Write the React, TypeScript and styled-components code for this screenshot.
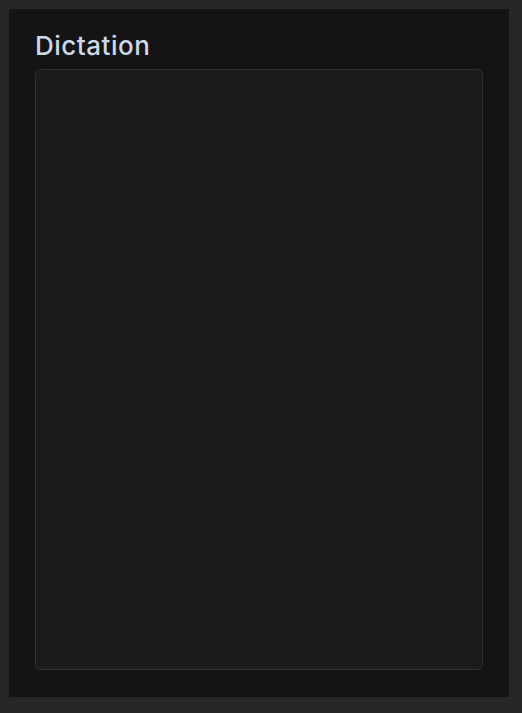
import styled, { createGlobalStyle } from "styled-components";

const GlobalStyle = createGlobalStyle`
  html, body {
    margin: 0;
    padding: 0;
    background: #272727;
  }
  body {
    padding: 9px 13px 16px 9px;
    font-family: Inter, "Noto Sans", sans-serif;
  }
`;

export default function App() {
  return (
    <>
      <GlobalStyle />
      <Panel>
        <Title>Dictation</Title>
        <TextCard />
      </Panel>
    </>
  );
}

const Panel = styled.main`
  width: 500px;
  height: 688px;
  box-sizing: border-box;
  background: #141414;
  padding: 20px 26px 27px 26px;
  display: flex;
  flex-direction: column;
  gap: 6px;
`;

const Title = styled.h1`
  margin: 0;
  font-size: 26px;
  font-weight: 500;
  line-height: 34px;
  letter-spacing: 0.5px;
  color: #cdd8ea;
`;

const TextCard = styled.div`
  flex: 1;
  background: #1b1b1b;
  border: 1px solid #323232;
  border-radius: 6px;
`;
